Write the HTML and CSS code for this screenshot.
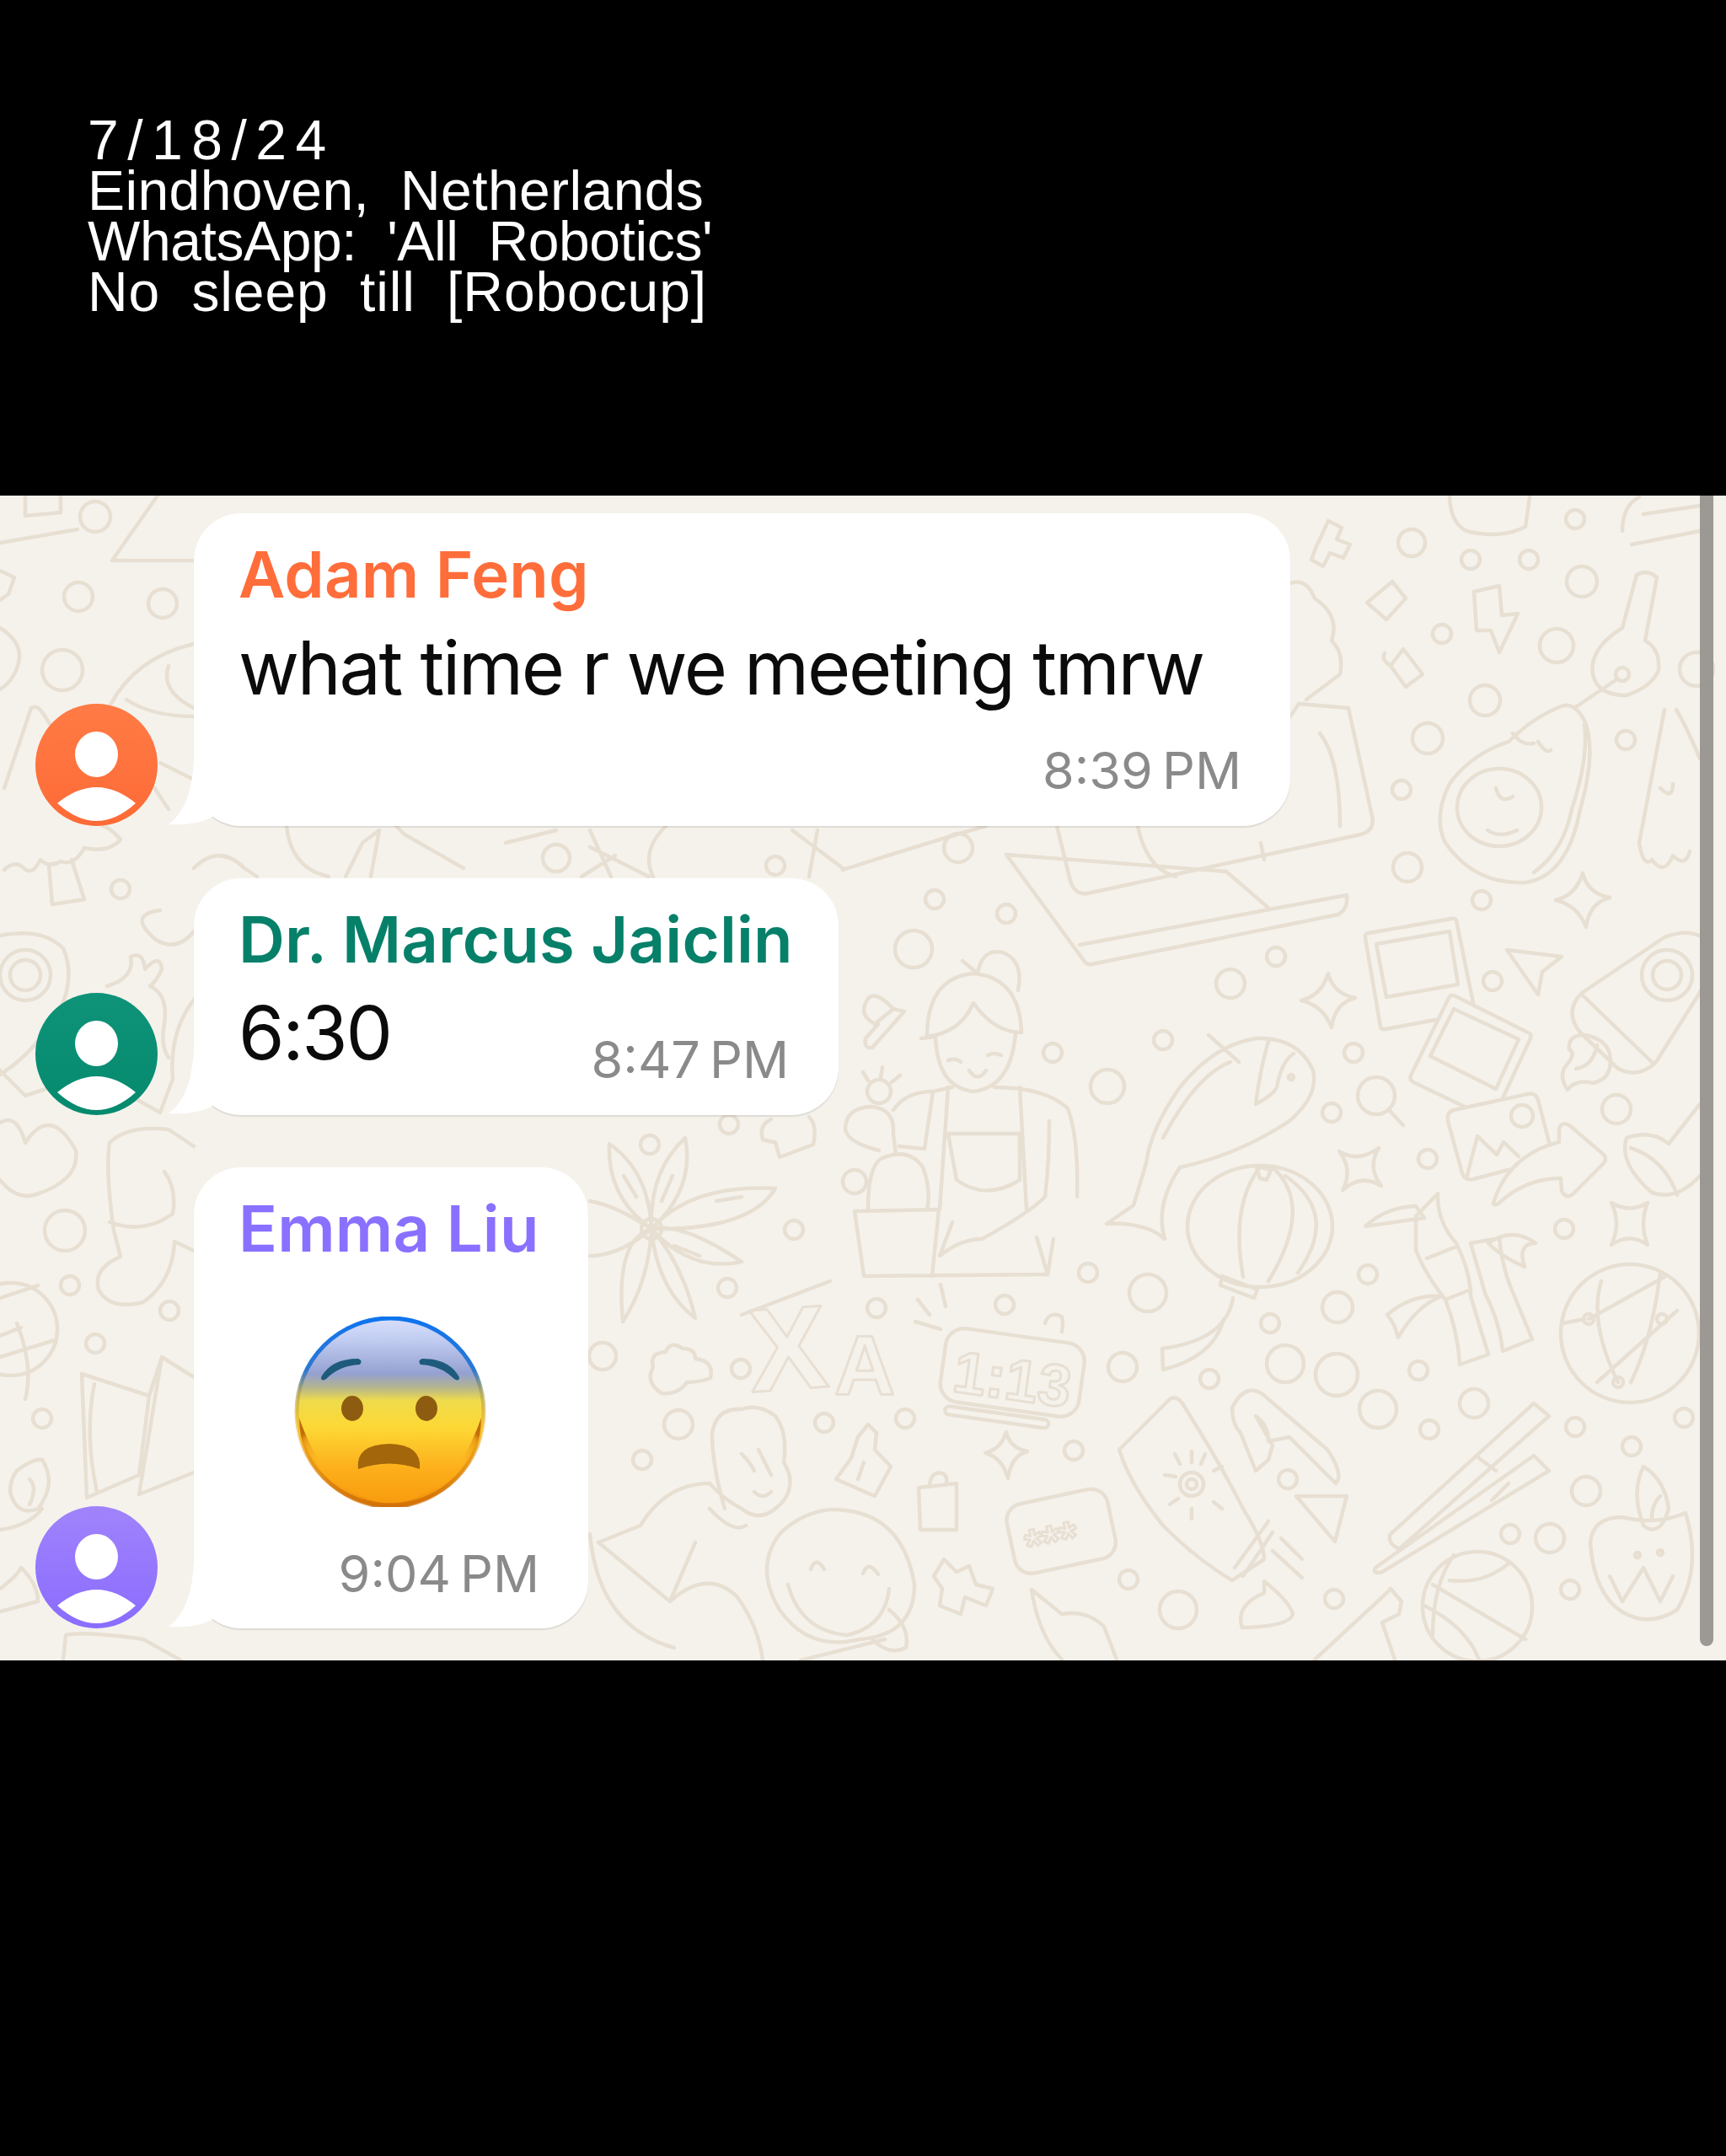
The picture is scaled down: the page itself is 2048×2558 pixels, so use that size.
FILE: index.html
```html
<!DOCTYPE html>
<html lang="en">
<head>
  <meta charset="UTF-8">
  <meta name="viewport" content="width=device-width, initial-scale=1.0">
  <title>All Robotics</title>
  <link rel="stylesheet" href="styles.css">
</head>
<body>
  <header class="caption">
    <div class="date">7/18/24</div>
    <div>Eindhoven, Netherlands</div>
    <div class="group">WhatsApp: 'All Robotics'</div>
    <div class="motto">No sleep till [Robocup]</div>
  </header>

  <main class="chat">
    <!-- wallpaper doodles, coordinates are page pixels -->
    <svg class="doodles" viewBox="0 588 2048 1382" aria-hidden="true">
      <g class="dots">
        <circle cx="93" cy="708" r="17"/><circle cx="193" cy="716" r="17"/><circle cx="74" cy="795" r="24"/><circle cx="143" cy="1055" r="11"/>
        <circle cx="113" cy="613" r="18"/><circle cx="77" cy="1460" r="24"/><circle cx="83" cy="1525" r="11"/><circle cx="113" cy="1594" r="11"/>
        <circle cx="201" cy="1555" r="11"/><circle cx="50" cy="1683" r="11"/>
        <circle cx="1675" cy="644" r="16"/><circle cx="1745" cy="664" r="11"/><circle cx="1814" cy="664" r="11"/><circle cx="1869" cy="616" r="11"/>
        <circle cx="1877" cy="690" r="18"/><circle cx="1711" cy="752" r="11"/><circle cx="1847" cy="766" r="20"/><circle cx="1762" cy="831" r="18"/>
        <circle cx="1694" cy="876" r="18"/><circle cx="1929" cy="878" r="11"/><circle cx="1663" cy="937" r="11"/><circle cx="1670" cy="1029" r="17"/>
        <circle cx="1758" cy="1068" r="11"/><circle cx="1137" cy="1006" r="17"/><circle cx="1109" cy="1067" r="11"/><circle cx="1194" cy="1084" r="11"/>
        <circle cx="1084" cy="1126" r="22"/><circle cx="1514" cy="1135" r="11"/><circle cx="1460" cy="1167" r="17"/><circle cx="1380" cy="1234" r="11"/>
        <circle cx="1249" cy="1249" r="11"/><circle cx="1606" cy="1249" r="11"/><circle cx="1580" cy="1320" r="11"/><circle cx="1314" cy="1289" r="20"/>
        <circle cx="1771" cy="1164" r="11"/><circle cx="1918" cy="1316" r="17"/><circle cx="1694" cy="1375" r="11"/><circle cx="2013" cy="794" r="20"/>
        <circle cx="942" cy="1459" r="11"/><circle cx="863" cy="1528" r="11"/><circle cx="1040" cy="1552" r="11"/><circle cx="1192" cy="1548" r="11"/>
        <circle cx="1291" cy="1510" r="11"/><circle cx="1362" cy="1534" r="22"/><circle cx="1623" cy="1512" r="11"/><circle cx="1856" cy="1458" r="11"/>
        <circle cx="1507" cy="1570" r="11"/><circle cx="1587" cy="1551" r="18"/><circle cx="715" cy="1609" r="16"/><circle cx="879" cy="1624" r="11"/>
        <circle cx="1332" cy="1622" r="17"/><circle cx="1435" cy="1636" r="11"/><circle cx="1525" cy="1618" r="22"/><circle cx="1586" cy="1631" r="25"/>
        <circle cx="1635" cy="1672" r="22"/><circle cx="1683" cy="1626" r="11"/><circle cx="1749" cy="1665" r="17"/><circle cx="1696" cy="1696" r="11"/>
        <circle cx="1869" cy="1693" r="11"/><circle cx="1998" cy="1682" r="11"/><circle cx="1936" cy="1716" r="11"/><circle cx="1882" cy="1769" r="17"/>
        <circle cx="1792" cy="1820" r="11"/><circle cx="1839" cy="1825" r="17"/><circle cx="805" cy="1690" r="17"/><circle cx="762" cy="1732" r="11"/>
        <circle cx="978" cy="1688" r="11"/><circle cx="1074" cy="1683" r="11"/><circle cx="1274" cy="1721" r="11"/><circle cx="1528" cy="1755" r="11"/>
        <circle cx="1339" cy="1874" r="11"/><circle cx="1398" cy="1910" r="22"/><circle cx="1583" cy="1897" r="11"/><circle cx="1863" cy="1886" r="11"/>
        <circle cx="660" cy="1018" r="16"/><circle cx="920" cy="1027" r="11"/><circle cx="771" cy="1358" r="11"/><circle cx="865" cy="1334" r="11"/>
      </g>

      <!-- top left: log, triangle, tree, key -->
      <path d="M0 644 L92 628 M30 588 L30 612 L72 608 L72 588 M187 588 L133 665 L230 665"/>
      <path d="M0 677 L17 685 L10 705 L0 712 M0 745 Q24 760 23 780 Q20 805 0 818"/>
      <path d="M5 935 L37 840 Q44 836 50 845 L60 860 M5 1032 Q18 1020 28 1030 Q38 1040 48 1020 Q58 1030 72 1022 Q88 1028 100 1006 Q130 1012 143 996 Q130 980 110 975 M58 1027 L62 1073 L100 1067 L85 1020"/>
      <path d="M130 838 Q160 780 230 764 M150 830 Q180 850 230 850 M200 790 Q190 820 230 840 M190 905 L230 925 M180 930 L200 960"/>
      <path d="M0 1110 Q50 1100 75 1125 Q90 1160 70 1200 Q40 1250 0 1275"/>
      <circle cx="30" cy="1157" r="30"/><circle cx="30" cy="1157" r="18"/>
      <path d="M127 1170 Q160 1160 155 1135 Q170 1128 172 1150 Q190 1130 192 1150 Q185 1165 178 1170 Q200 1180 195 1215 Q190 1240 200 1255 M0 1270 L30 1300 L60 1290"/>
      <path d="M190 1080 Q150 1085 185 1115 Q210 1130 230 1105 M235 1180 Q200 1220 205 1280 L190 1320 L140 1292 M0 1332 Q20 1320 30 1356 Q60 1310 90 1365 Q95 1400 43 1417 Q20 1425 0 1400"/>

      <!-- sock, book and globe on the left -->
      <path d="M130 1356 Q125 1390 135 1460 L143 1491 Q110 1505 117 1530 Q130 1555 170 1545 Q205 1520 207 1473 L230 1484 M130 1450 Q170 1465 205 1440 Q210 1410 195 1390 M130 1356 Q150 1335 200 1340 L230 1360"/>
      <path d="M103 1777 L97 1630 L177 1656 L192 1610 L230 1634 M165 1773 L192 1610 M165 1773 L230 1747 M103 1777 L165 1750 L177 1656 M112 1642 Q100 1700 115 1770"/>
      <circle cx="13" cy="1577" r="55"/>
      <path d="M0 1540 L45 1525 M20 1570 Q40 1620 30 1660 M0 1610 L65 1590 M0 1585 L25 1575"/>
      <path d="M20 1745 Q40 1730 50 1732 Q68 1760 45 1790 Q20 1800 12 1770 Q12 1755 20 1745 M35 1755 Q45 1765 35 1785 M0 1815 Q35 1810 50 1790 M0 1885 Q20 1870 25 1860 Q45 1880 45 1900 L0 1912 M75 1970 L78 1940 Q100 1935 170 1945 L215 1970"/>

      <!-- under first bubble -->
      <path d="M340 980 Q345 1030 390 1040 M410 1040 L430 1000 L450 985 L440 1040 M550 1030 L480 990 L470 980 M230 1030 Q260 1000 290 1030 L305 1040 M660 985 L600 1000 M700 985 L725 1040 M790 980 Q760 1010 775 1040 M940 985 L1000 1030 M1000 1032 Q1100 1000 1170 980 M960 1040 L970 985 M700 1005 L770 1040 M690 1040 L730 1015"/>

      <!-- laptop, cloud, bubble shapes -->
      <path d="M1254 980 L1270 1045 Q1275 1062 1290 1060 L1615 990 Q1632 985 1628 968 L1600 840 L1541 835 L1531 850"/>
      <path d="M1194 1014 L1287 1141 Q1290 1146 1300 1143 L1588 1085 Q1600 1078 1598 1062 L1281 1121 M1194 1014 L1455 1034 M1455 1034 L1505 1077 M1350 980 Q1360 1030 1395 1040 M1496 1000 L1500 1020"/>
      <path d="M1531 692 Q1550 685 1560 710 Q1590 730 1580 760 Q1595 775 1590 800 L1550 830 M1566 870 Q1590 900 1590 980"/>
      <path d="M1566 640 L1576 618 L1592 626 L1586 640 L1602 646 L1594 662 L1578 656 L1570 672 L1556 664 L1562 648 Z"/>
      <path d="M1622 715 L1652 690 L1668 710 L1645 735 Z"/>
      <path d="M1749 702 L1779 695 L1782 730 L1801 728 L1779 774 L1769 748 L1752 748 Z"/>
      <path d="M1650 790 L1668 815 L1688 800 L1665 770 Z M1643 775 Q1638 782 1650 790"/>
      <path d="M1720 586 Q1720 620 1740 630 Q1780 640 1810 625 L1815 590"/>

      <!-- avocado with guitar on top -->
      <path d="M1855 837 Q1820 850 1790 880 Q1745 895 1720 930 Q1700 970 1715 1000 Q1750 1050 1810 1047 Q1860 1040 1875 960 Q1895 890 1880 855 Q1870 835 1855 837 Z M1880 860 Q1885 900 1865 960 Q1855 1010 1820 1035"/>
      <ellipse cx="1779" cy="958" rx="50" ry="46"/>
      <path d="M1868 840 L1920 805 M1795 870 Q1805 885 1820 882 M1825 880 Q1835 895 1840 890 M1775 935 Q1780 955 1795 945 M1765 985 Q1780 995 1800 985"/>
      <circle cx="1925" cy="800" r="8"/>
      <path d="M1942 682 Q1955 675 1966 685 L1952 760 Q1970 770 1968 795 Q1960 815 1930 825 Q1895 825 1890 800 Q1885 770 1925 745 Z"/>

      <!-- tree and top right corner -->
      <path d="M1975 842 L1945 1000 Q1950 1030 1960 1020 Q1975 1040 1985 1015 Q2000 1030 2005 1010 M1989 842 Q2000 860 2017 900 M1970 935 Q1985 950 1985 930"/>
      <path d="M1936 646 L2017 630 M1945 590 Q1925 600 1925 630 M1950 610 L2017 600"/>

      <!-- polaroids, arrow, plane, rocket -->
      <path d="M1748 1190 L1728 1092 Q1727 1089 1722 1090 L1624 1107 Q1619 1108 1620 1113 L1638 1218 Q1639 1222 1644 1221 L1703 1210 M1633 1120 L1720 1105 L1730 1168 L1645 1183 Z"/>
      <path d="M1783 1303 L1816 1232 Q1818 1227 1813 1225 L1727 1182 Q1722 1179 1719 1184 L1674 1276 Q1672 1281 1677 1284 L1738 1313 M1725 1197 L1802 1233 L1775 1292 L1697 1253 Z"/>
      <path d="M1838 1355 L1825 1305 Q1822 1296 1813 1298 L1725 1317 Q1716 1320 1718 1330 L1735 1392 Q1738 1401 1748 1399 L1790 1388 M1740 1398 L1753 1348 L1776 1370 L1784 1355 L1802 1372"/>
      <circle cx="1806" cy="1324" r="13"/>
      <path d="M1772 1427 Q1790 1370 1850 1355 L1850 1340 Q1852 1330 1862 1335 L1903 1370 Q1907 1375 1903 1380 L1866 1417 Q1858 1423 1853 1413 L1852 1398 Q1810 1398 1778 1428 Q1772 1431 1772 1427 Z"/>
      <circle cx="1633" cy="1300" r="22"/>
      <path d="M1649 1318 L1665 1335"/>
      <path d="M1788 1127 L1853 1135 L1830 1153 L1825 1180 Z"/>
      <path d="M1877 1178 L1975 1112 Q2005 1100 2025 1115 L2028 1160 L1965 1260 Q1945 1280 1920 1268 L1875 1225 Q1855 1200 1877 1178 Z M1877 1180 L1962 1262"/>
      <circle cx="1978" cy="1157" r="30"/><circle cx="1978" cy="1157" r="17"/>
      <path d="M1880 1228 Q1860 1228 1862 1245 Q1870 1250 1860 1262 Q1848 1275 1860 1293 Q1870 1280 1890 1285 Q1915 1280 1910 1250 Q1905 1232 1880 1228 M1870 1268 Q1890 1265 1895 1240"/>
      <path d="M1930 1350 Q1960 1340 1980 1357 L2017 1310 M1930 1350 Q1920 1380 1960 1415 Q1990 1425 2017 1395 M1935 1362 Q1975 1375 1990 1418"/>

      <!-- sparkles -->
      <path transform="translate(1878 1068)" d="M0 -32 Q6 -8 32 -3 Q8 3 4 32 Q-6 6 -32 0 Q-8 -6 0 -32 Z"/>
      <path transform="translate(1576 1187)" d="M0 -32 Q6 -8 32 -3 Q8 3 4 32 Q-6 6 -32 0 Q-8 -6 0 -32 Z"/>
      <path transform="translate(1194 1724)" d="M0 -25 Q4 -6 25 -2 Q6 3 2 30 Q-5 5 -25 0 Q-6 -5 0 -25 Z"/>
      <path d="M1589 1366 Q1612 1380 1636 1362 Q1622 1385 1639 1407 Q1615 1392 1593 1412 Q1606 1388 1589 1366 Z"/>
      <path d="M1912 1427 Q1934 1440 1955 1427 Q1945 1452 1955 1477 Q1934 1462 1912 1477 Q1924 1452 1912 1427 Z"/>

      <!-- girl with bun, cactus, fish -->
      <path d="M1100 1230 Q1100 1160 1155 1155 Q1210 1160 1212 1225 M1100 1230 Q1140 1225 1155 1190 Q1180 1225 1212 1225 M1110 1230 Q1112 1290 1155 1295 Q1200 1290 1205 1225 M1093 1232 L1110 1230 M1160 1155 Q1165 1125 1190 1130 Q1215 1140 1208 1175 M1142 1140 L1160 1155 M1125 1258 Q1135 1255 1140 1260 M1172 1252 Q1180 1248 1188 1252 M1150 1270 Q1160 1285 1170 1270"/>
      <path d="M1060 1317 Q1075 1295 1107 1295 Q1120 1292 1130 1290 M1180 1290 Q1240 1290 1267 1315 Q1280 1350 1278 1420 M1107 1295 L1097 1363 L1067 1360 M1125 1290 L1115 1435 M1210 1290 L1218 1435 M1125 1345 L1210 1345 L1210 1400 Q1170 1425 1135 1400 L1125 1345"/>
      <path d="M1060 1197 Q1035 1170 1027 1190 Q1020 1205 1038 1215 L1060 1197 L1073 1200 L1035 1243 Q1025 1245 1027 1232 L1042 1215"/>
      <path d="M915 1328 Q900 1335 905 1352 Q915 1355 920 1355 L925 1373 L965 1358 Q970 1335 960 1325"/>
      <path d="M1043 1365 Q1005 1355 1003 1340 Q1003 1315 1033 1313 Q1062 1315 1060 1345 L1063 1370"/>
      <circle cx="1043" cy="1295" r="14"/>
      <path d="M1030 1282 L1024 1272 M1045 1278 L1047 1266 M1058 1284 L1068 1276"/>
      <path d="M1030 1435 Q1030 1385 1045 1375 Q1078 1360 1095 1385 Q1105 1410 1100 1435 M1014 1437 L1114 1435 L1106 1514 M1014 1437 L1025 1514 L1243 1512 L1230 1468"/>
      <circle cx="1014" cy="1402" r="14"/>
      <path d="M1130 1450 L1115 1490 Q1140 1470 1165 1470 Q1220 1440 1240 1420 Q1245 1380 1245 1330 M1250 1470 L1243 1512"/>
      <path d="M1558 1270 Q1540 1230 1490 1232 Q1440 1240 1400 1290 Q1365 1340 1360 1380 L1345 1430 L1313 1452 Q1360 1450 1382 1470 Q1370 1430 1400 1385 Q1470 1370 1530 1330 Q1565 1300 1558 1270 Z M1434 1228 L1470 1260 M1505 1235 Q1495 1270 1490 1310 Q1510 1300 1515 1290 Q1520 1260 1535 1250 M1380 1350 Q1420 1275 1460 1260"/>
      <circle cx="1532" cy="1278" r="3"/>

      <!-- flower -->
      <path d="M773 1458 Q720 1420 723 1357 Q770 1390 773 1458 Z M773 1458 Q770 1390 813 1350 Q825 1410 773 1458 Z M773 1458 Q820 1405 920 1410 Q890 1460 773 1458 Z M773 1458 Q810 1450 880 1497 Q820 1510 773 1458 Z M773 1458 Q730 1470 739 1568 Q770 1520 773 1458 Z M773 1458 Q810 1500 825 1564 Q780 1530 773 1458 Z M773 1458 Q735 1490 700 1490 M773 1458 Q730 1430 700 1425 M740 1395 L755 1420 M798 1395 L785 1425 M850 1425 L880 1420 M800 1478 L830 1490"/>
      <circle cx="773" cy="1458" r="12"/>

      <!-- lantern, bamboo, globe -->
      <ellipse cx="1495" cy="1455" rx="86" ry="72"/>
      <path d="M1495 1385 Q1460 1430 1475 1515 M1510 1385 Q1560 1430 1505 1520 M1525 1395 Q1590 1440 1540 1510 M1490 1383 L1508 1388 L1503 1400 L1495 1398 Z M1450 1514 L1492 1530 L1488 1540 L1448 1525 Z M1463 1540 Q1455 1590 1379 1600 L1380 1625 Q1440 1610 1452 1565"/>
      <path d="M1620 1455 Q1645 1432 1680 1431 L1690 1445 Z M1680 1443 L1706 1416 Q1705 1450 1728 1475 Q1745 1510 1745 1538 L1766 1607 L1732 1619 Q1730 1580 1715 1542 Q1690 1510 1680 1483 Z M1693 1493 L1728 1479 M1715 1542 L1745 1530"/>
      <path d="M1745 1475 L1779 1469 Q1782 1500 1792 1526 L1818 1589 L1783 1603 Q1780 1570 1762 1534 Q1755 1510 1745 1475 Z M1766 1475 Q1795 1455 1822 1475 Q1800 1475 1809 1503 Q1780 1490 1766 1475 Z M1646 1560 Q1675 1535 1710 1538 Q1680 1550 1659 1587 Q1655 1570 1646 1560 Z"/>
      <circle cx="1934" cy="1582" r="82"/>
      <path d="M1885 1565 L1975 1515 M1895 1640 L1990 1555 M1900 1520 Q1885 1570 1920 1640 M1970 1510 Q1960 1590 1935 1640 M1855 1570 L1880 1565"/>
      <circle cx="1885" cy="1565" r="6"/><circle cx="1972" cy="1565" r="6"/><circle cx="1920" cy="1640" r="6"/>

      <!-- cloud, alarm clock, letters -->
      <path d="M785 1653 Q765 1640 775 1622 Q770 1605 790 1604 Q795 1590 810 1600 Q825 1600 825 1612 Q848 1615 843 1635 Q830 1640 815 1640 Q805 1655 785 1653 Z"/>
      <g transform="rotate(8 1198 1630)">
        <rect x="1118" y="1584" width="166" height="88" rx="22"/>
        <rect x="1128" y="1678" width="124" height="10" rx="5"/>
        <text class="doodle-text" x="1132" y="1660" font-size="70">1:13</text>
      </g>
      <path d="M1116 1577 L1086 1568 M1103 1560 L1089 1542 M1122 1550 L1116 1524 M1240 1570 Q1245 1555 1260 1562 Q1262 1570 1260 1580"/>
      <text class="doodle-text" x="888" y="1648" font-size="140" transform="rotate(-4 940 1600)">X</text>
      <text class="doodle-text" x="990" y="1655" font-size="100">A</text>
      <path d="M880 1560 L985 1520"/>

      <!-- bottom row: man, smiley, puzzle, tube, heart, chopsticks -->
      <path d="M860 1790 Q845 1740 845 1700 Q850 1670 880 1672 Q900 1665 920 1680 Q935 1700 930 1735 Q945 1760 930 1780 Q905 1810 880 1790 Q860 1780 842 1760 M880 1725 Q890 1735 895 1745 M900 1720 L915 1750 M895 1770 Q905 1780 915 1770"/>
      <path d="M842 1760 Q790 1760 760 1810 L710 1830 L795 1900 L825 1830 M842 1790 Q870 1820 885 1810 M700 1820 Q710 1930 800 1955 M795 1900 Q840 1860 875 1895 Q900 1930 905 1970"/>
      <path d="M985 1791 Q1070 1790 1085 1880 Q1085 1940 1020 1945 Q960 1960 925 1910 Q895 1860 925 1820 Q950 1795 985 1791 Z M935 1880 Q950 1935 1005 1940 Q1050 1930 1055 1885 M962 1862 Q968 1845 978 1862 M1024 1867 Q1030 1850 1042 1868"/>
      <path d="M1055 1910 Q1080 1930 1075 1955 Q1055 1965 1035 1945 M1050 1945 L950 1970"/>
      <path d="M992 1755 L1010 1730 L1018 1705 L1030 1690 L1040 1700 L1038 1720 L1057 1740 L1038 1775 Z M1018 1755 L1025 1735"/>
      <path d="M1092 1815 L1090 1765 L1135 1760 L1135 1815 Z M1103 1762 Q1105 1745 1118 1748 Q1126 1752 1122 1762"/>
      <path d="M1120 1850 L1135 1865 L1150 1858 L1158 1880 L1178 1885 L1170 1905 L1145 1895 L1140 1915 L1115 1905 L1118 1885 L1108 1870 Z"/>
      <g transform="rotate(-12 1258 1816)">
        <rect x="1198" y="1775" width="122" height="84" rx="20"/>
        <text class="doodle-text" x="1214" y="1845" font-size="54">***</text>
      </g>
      <path d="M1328 1720 L1388 1660 Q1396 1655 1403 1665 Q1450 1740 1475 1790 Q1500 1830 1500 1850 L1462 1875 Q1420 1850 1380 1810 Q1340 1760 1328 1720 Z M1465 1860 L1505 1805 M1475 1870 L1510 1818 M1510 1840 L1545 1872 M1520 1825 L1545 1850"/>
      <circle cx="1414" cy="1761" r="14"/><circle cx="1414" cy="1761" r="6"/>
      <path d="M1414 1722 L1414 1735 M1440 1745 L1450 1740 M1382 1750 L1395 1752 M1388 1785 L1398 1778 M1440 1782 L1450 1790 M1414 1790 L1414 1802 M1394 1725 L1400 1737 M1430 1725 L1425 1737"/>
      <path d="M1462 1670 Q1480 1635 1505 1660 L1575 1720 Q1595 1750 1585 1760 L1530 1705 L1505 1710 Q1505 1690 1490 1680 L1510 1715 L1505 1732 L1490 1745 L1472 1700 Q1462 1690 1462 1670"/>
      <path d="M1538 1775 L1598 1775 L1584 1829 Z"/>
      <path d="M1650 1820 L1820 1665 L1838 1680 L1660 1838 Q1645 1830 1650 1820 M1632 1860 L1820 1727 L1838 1745 L1640 1865 Q1628 1868 1632 1860 M1755 1730 L1775 1745 M1770 1780 L1790 1760"/>
      <path d="M1474 1931 Q1465 1905 1500 1890 L1500 1876 Q1530 1900 1534 1915 Q1530 1930 1474 1931 Z"/>
      <path d="M1560 1969 L1640 1895 L1650 1885 L1663 1900 L1660 1915 L1640 1925 L1655 1969"/>
      <circle cx="1753" cy="1906" r="65"/>
      <path d="M1725 1845 Q1700 1880 1700 1940 M1790 1855 Q1760 1880 1720 1875 M1700 1880 L1810 1945 M1690 1905 Q1740 1930 1755 1969"/>
      <path d="M1224 1886 Q1232 1940 1260 1969 M1224 1886 L1260 1915 Q1290 1910 1310 1930 L1325 1969"/>
      <path d="M1950 1740 Q1935 1770 1950 1810 Q1970 1825 1980 1790 Q1975 1755 1950 1740 Z M1960 1800 Q1960 1785 1970 1775 M1887 1830 Q1890 1800 1925 1800 Q1965 1810 2000 1795 Q2020 1860 1990 1910 Q1950 1935 1915 1905 Q1890 1880 1887 1830 M1910 1870 L1925 1900 L1950 1860 L1970 1900 L1985 1870"/>
      <circle cx="1943" cy="1845" r="3"/><circle cx="1970" cy="1842" r="3"/>
    </svg>

    <div class="row">
      <svg class="avatar" viewBox="0 0 145 145" aria-hidden="true">
        <defs>
          <linearGradient id="grad-orange" x1="0" y1="0" x2="0" y2="1"><stop offset="0" stop-color="#ff7b45"/><stop offset="1" stop-color="#fe6a36"/></linearGradient>
          <linearGradient id="grad-green" x1="0" y1="0" x2="0" y2="1"><stop offset="0" stop-color="#0e9379"/><stop offset="1" stop-color="#068a6e"/></linearGradient>
          <linearGradient id="grad-purple" x1="0" y1="0" x2="0" y2="1"><stop offset="0" stop-color="#a083fb"/><stop offset="1" stop-color="#8a6cff"/></linearGradient>
        </defs>
        <circle cx="72.5" cy="72.5" r="72.5" fill="url(#grad-orange)"/>
        <ellipse cx="72.5" cy="60" rx="25.5" ry="27" fill="#fff"/>
        <path d="M26 118 Q72.5 80 119 118 Q72.5 160 26 118 Z" fill="#fff"/>
      </svg>
      <div class="bubble bubble-wide">
        <svg class="tail" viewBox="0 0 90 80" aria-hidden="true"><path d="M30 0 Q28 58 0 78 Q35 80 54 68 Q65 78 90 79 L90 0 Z"/></svg>
        <div class="name orange">Adam Feng</div>
        <div class="text">what time r we meeting tmrw</div>
        <div class="time">8:39&#8201;PM</div>
      </div>
    </div>

    <div class="row">
      <svg class="avatar" viewBox="0 0 145 145" aria-hidden="true">
        <circle cx="72.5" cy="72.5" r="72.5" fill="url(#grad-green)"/>
        <ellipse cx="72.5" cy="60" rx="25.5" ry="27" fill="#fff"/>
        <path d="M26 118 Q72.5 80 119 118 Q72.5 160 26 118 Z" fill="#fff"/>
      </svg>
      <div class="bubble bubble-mid">
        <svg class="tail" viewBox="0 0 90 80" aria-hidden="true"><path d="M30 0 Q28 58 0 78 Q35 80 54 68 Q65 78 90 79 L90 0 Z"/></svg>
        <div class="name green">Dr. Marcus Jaiclin</div>
        <div class="inline">
          <div class="text">6:30</div>
          <div class="time">8:47&#8201;PM</div>
        </div>
      </div>
    </div>

    <div class="row">
      <svg class="avatar" viewBox="0 0 145 145" aria-hidden="true">
        <circle cx="72.5" cy="72.5" r="72.5" fill="url(#grad-purple)"/>
        <ellipse cx="72.5" cy="60" rx="25.5" ry="27" fill="#fff"/>
        <path d="M26 118 Q72.5 80 119 118 Q72.5 160 26 118 Z" fill="#fff"/>
      </svg>
      <div class="bubble bubble-narrow">
        <svg class="tail" viewBox="0 0 90 80" aria-hidden="true"><path d="M30 0 Q28 58 0 78 Q35 80 54 68 Q65 78 90 79 L90 0 Z"/></svg>
        <div class="name purple">Emma Liu</div>
        <svg class="emoji" viewBox="0 0 228 226" aria-hidden="true">
          <defs>
            <linearGradient id="face" x1="0" y1="0" x2="0" y2="1">
              <stop offset="0" stop-color="#d8e0fb"/>
              <stop offset=".12" stop-color="#c1ccf1"/>
              <stop offset=".3" stop-color="#94a1d0"/>
              <stop offset=".37" stop-color="#b4b48d"/>
              <stop offset=".44" stop-color="#eedb4c"/>
              <stop offset=".58" stop-color="#fdd835"/>
              <stop offset=".8" stop-color="#fdaf1b"/>
              <stop offset="1" stop-color="#f79a0d"/>
            </linearGradient>
            <radialGradient id="edge" cx=".5" cy=".45" r=".55">
              <stop offset=".72" stop-color="#e8830a" stop-opacity="0"/>
              <stop offset=".92" stop-color="#dd7a08" stop-opacity=".55"/>
              <stop offset="1" stop-color="#b96206" stop-opacity=".9"/>
            </radialGradient>
            <linearGradient id="rim" x1="0" y1="0" x2="0" y2="1">
              <stop offset="0" stop-color="#0f74ee"/>
              <stop offset=".28" stop-color="#2d78d2"/>
              <stop offset=".4" stop-color="#a79a50" stop-opacity=".6"/>
              <stop offset=".6" stop-color="#eea81a" stop-opacity=".4"/>
              <stop offset="1" stop-color="#c96a06"/>
            </linearGradient>
          </defs>
          <circle cx="114" cy="113" r="112" fill="url(#face)"/>
          <path class="emoji-glow" d="M3 113 A111 111 0 0 1 225 113 A111 111 0 0 1 3 113 Z" stroke="url(#rim)"/>
          <path d="M6 120 A108 108 0 0 0 222 120 Q190 215 114 222 Q38 215 6 120 Z" fill="url(#edge)"/>
          <path d="M32 72 Q44 50 76 50 Q82 52 78 57 Q54 58 38 74 Q32 78 32 72 Z" fill="#1e5a7c"/>
          <path d="M196 72 Q184 50 152 50 Q146 52 150 57 Q174 58 190 74 Q196 78 196 72 Z" fill="#1e5a7c"/>
          <ellipse cx="69" cy="109" rx="13" ry="15" fill="#8e5c10"/>
          <ellipse cx="157" cy="109" rx="13" ry="15" fill="#8e5c10"/>
          <path d="M76 181 Q72 152 113 151 Q152 152 149 181 Q113 168 76 181 Z" fill="#a3660a"/>
        </svg>
        <div class="time">9:04&#8201;PM</div>
      </div>
    </div>

    <div class="scrollbar"></div>
  </main>
</body>
</html>
```

FILE: styles.css
```css
html, body {
  margin: 0;
  padding: 0;
  background: #000;
}
body {
  width: 2048px;
  height: 2558px;
  overflow: hidden;
}

.caption {
  height: 588px;
  box-sizing: border-box;
  padding: 136px 0 0 104px;
  color: #fff;
  font-family: "Liberation Sans", Arial, sans-serif;
  font-size: 66px;
  line-height: 60px;
  letter-spacing: 0.4px;
  word-spacing: 18px;
}
.date {
  letter-spacing: 10.5px;
}
.group {
  letter-spacing: -0.4px;
}
.motto {
  letter-spacing: 0.9px;
}

.chat {
  position: relative;
  height: 1382px;
  box-sizing: border-box;
  padding: 21px 0 0 42px;
  background: #f5f2ec;
  overflow: hidden;
  display: flex;
  flex-direction: column;
  font-family: Inter, "Liberation Sans", sans-serif;
}
.doodles {
  position: absolute;
  left: 0;
  top: 0;
  width: 2048px;
  height: 1382px;
  fill: none;
  stroke: #e8dfd3;
  stroke-width: 4.5;
  stroke-linecap: round;
  stroke-linejoin: round;
}
.doodle-text {
  font-family: "Liberation Sans", sans-serif;
  font-weight: bold;
  fill: none;
  stroke: #e8dfd3;
  stroke-width: 3;
}

.row {
  position: relative;
  display: flex;
  align-items: flex-end;
  gap: 43px;
  margin-bottom: 62px;
}
.avatar {
  width: 145px;
  height: 145px;
  flex: none;
}

.bubble {
  position: relative;
  box-sizing: border-box;
  background: #fff;
  border-radius: 56px;
  padding: 27px 58px 0 53px;
  box-shadow: 0 2px 1px rgba(60, 50, 40, 0.12);
}
.bubble-wide { width: 1301px; height: 371px; }
.bubble-mid { width: 765px; height: 281px; padding-right: 59px; }
.bubble-narrow { width: 468px; height: 547px; }

.tail {
  position: absolute;
  left: -30px;
  bottom: 0;
  width: 90px;
  height: 80px;
  fill: #fff;
}

.name {
  font-size: 76px;
  font-weight: 600;
  line-height: 90px;
  letter-spacing: 0.2px;
  white-space: nowrap;
}
.orange { color: #ff6d3a; }
.green { color: #07806a; }
.purple { color: #8a70ff; }

.text {
  color: #0b0b0b;
  font-size: 88px;
  line-height: 110px;
  letter-spacing: -2.3px;
  white-space: nowrap;
}
.time {
  color: #8a8a8a;
  font-size: 61px;
  line-height: 70px;
  text-align: right;
  white-space: nowrap;
}
.bubble-wide .text { margin-top: 11px; }
.bubble-wide .time { margin-top: 32px; }

.inline {
  display: flex;
  justify-content: space-between;
  align-items: flex-end;
  margin-top: 11px;
}
.inline .time { margin-bottom: -12px; }

.emoji {
  display: block;
  width: 228px;
  height: 226px;
  margin: 60px 0 0 66px;
}
.emoji-glow {
  fill: none;
  stroke-width: 5;
}
.bubble-narrow .time { margin-top: 44px; }

.scrollbar {
  position: absolute;
  top: 0;
  left: 2017px;
  width: 16px;
  height: 1365px;
  background: #9c9894;
  border-radius: 0 0 8px 8px;
}
```
